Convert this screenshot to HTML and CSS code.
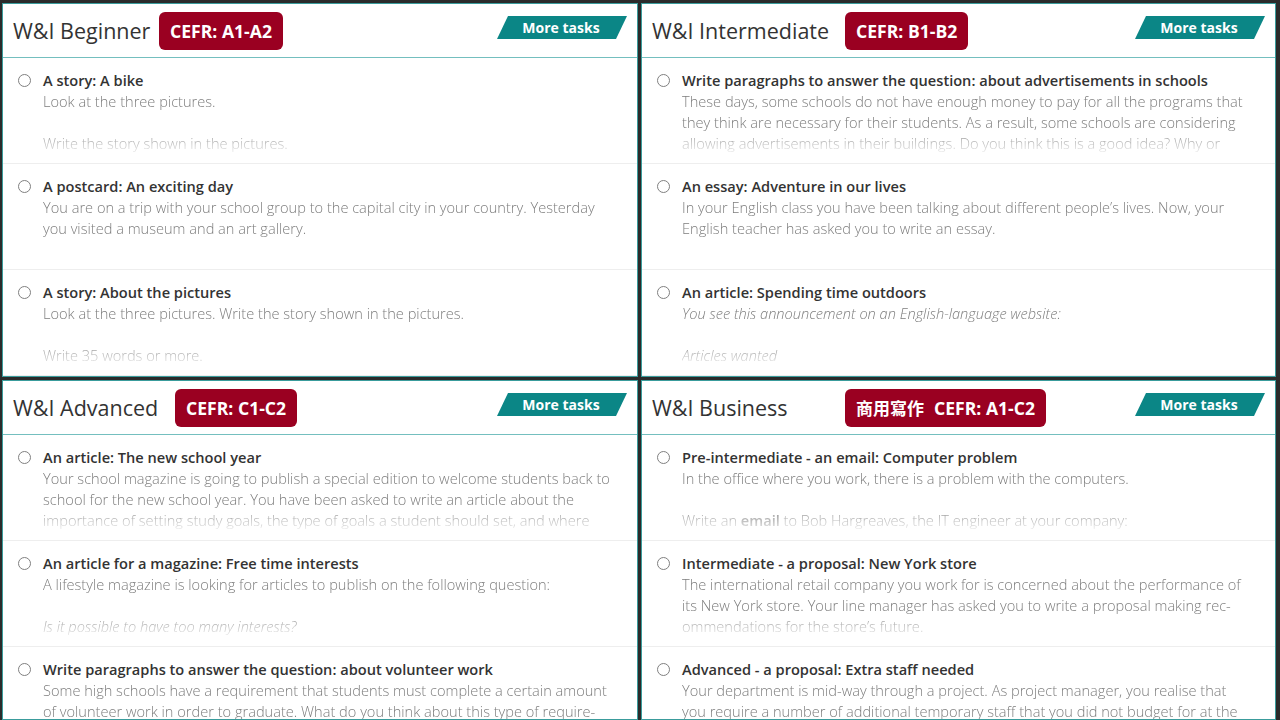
FILE: index.html
```html
<!DOCTYPE html>
<html lang="en">
<head>
<meta charset="utf-8">
<title>Writing tasks</title>
<link rel="stylesheet" href="styles.css">
</head>
<body>
<main class="board">

  <section class="panel panel--beginner">
    <header class="panel-head">
      <h2 class="panel-title">W&amp;I Beginner</h2>
      <span class="badge">CEFR: A1-A2</span>
      <a class="more" href="#">More tasks</a>
    </header>
    <ul class="tasks">
      <li class="task">
        <span class="radio"></span>
        <div class="task-body">
          <h3 class="task-title">A story: A bike</h3>
          <div class="task-desc">
            <p>Look at the three pictures.</p>
            <p>Write the story shown in the pictures.</p>
          </div>
        </div>
      </li>
      <li class="task">
        <span class="radio"></span>
        <div class="task-body">
          <h3 class="task-title">A postcard: An exciting day</h3>
          <div class="task-desc">
            <p>You are on a trip with your school group to the capital city in your country. Yesterday you visited a museum and an art gallery.</p>
          </div>
        </div>
      </li>
      <li class="task">
        <span class="radio"></span>
        <div class="task-body">
          <h3 class="task-title">A story: About the pictures</h3>
          <div class="task-desc">
            <p>Look at the three pictures. Write the story shown in the pictures.</p>
            <p>Write 35 words or more.</p>
          </div>
        </div>
      </li>
    </ul>
  </section>

  <section class="panel panel--intermediate panel--right">
    <header class="panel-head">
      <h2 class="panel-title">W&amp;I Intermediate</h2>
      <span class="badge">CEFR: B1-B2</span>
      <a class="more" href="#">More tasks</a>
    </header>
    <ul class="tasks">
      <li class="task">
        <span class="radio"></span>
        <div class="task-body">
          <h3 class="task-title">Write paragraphs to answer the question: about advertisements in schools</h3>
          <div class="task-desc">
            <p>These days, some schools do not have enough money to pay for all the programs that they think are necessary for their students. As a result, some schools are considering allowing advertisements in their buildings. Do you think this is a good idea? Why or why not?</p>
          </div>
        </div>
      </li>
      <li class="task">
        <span class="radio"></span>
        <div class="task-body">
          <h3 class="task-title">An essay: Adventure in our lives</h3>
          <div class="task-desc">
            <p>In your English class you have been talking about different people’s lives. Now, your English teacher has asked you to write an essay.</p>
          </div>
        </div>
      </li>
      <li class="task">
        <span class="radio"></span>
        <div class="task-body">
          <h3 class="task-title">An article: Spending time outdoors</h3>
          <div class="task-desc">
            <p><em>You see this announcement on an English-language website:</em></p>
            <p><em>Articles wanted</em></p>
          </div>
        </div>
      </li>
    </ul>
  </section>

  <section class="panel panel--advanced">
    <header class="panel-head">
      <h2 class="panel-title">W&amp;I Advanced</h2>
      <span class="badge">CEFR: C1-C2</span>
      <a class="more" href="#">More tasks</a>
    </header>
    <ul class="tasks">
      <li class="task">
        <span class="radio"></span>
        <div class="task-body">
          <h3 class="task-title">An article: The new school year</h3>
          <div class="task-desc">
            <p>Your school magazine is going to publish a special edition to welcome students back to school for the new school year. You have been asked to write an article about the importance of setting study goals, the type of goals a student should set, and where students can find support.</p>
          </div>
        </div>
      </li>
      <li class="task">
        <span class="radio"></span>
        <div class="task-body">
          <h3 class="task-title">An article for a magazine: Free time interests</h3>
          <div class="task-desc">
            <p>A lifestyle magazine is looking for articles to publish on the following question:</p>
            <p><em>Is it possible to have too many interests?</em></p>
          </div>
        </div>
      </li>
      <li class="task">
        <span class="radio"></span>
        <div class="task-body">
          <h3 class="task-title">Write paragraphs to answer the question: about volunteer work</h3>
          <div class="task-desc">
            <p>Some high schools have a requirement that students must complete a certain amount of volunteer work in order to graduate. What do you think about this type of require&shy;ment?</p>
          </div>
        </div>
      </li>
    </ul>
  </section>

  <section class="panel panel--business panel--right">
    <header class="panel-head">
      <h2 class="panel-title">W&amp;I Business</h2>
      <span class="badge"><span class="badge-cjk">商用寫作</span>CEFR: A1-C2</span>
      <a class="more" href="#">More tasks</a>
    </header>
    <ul class="tasks">
      <li class="task">
        <span class="radio"></span>
        <div class="task-body">
          <h3 class="task-title">Pre-intermediate - an email: Computer problem</h3>
          <div class="task-desc">
            <p>In the office where you work, there is a problem with the computers.</p>
            <p>Write an <strong>email</strong> to Bob Hargreaves, the IT engineer at your company:</p>
          </div>
        </div>
      </li>
      <li class="task">
        <span class="radio"></span>
        <div class="task-body">
          <h3 class="task-title">Intermediate - a proposal: New York store</h3>
          <div class="task-desc">
            <p>The international retail company you work for is concerned about the performance of its New York store. Your line manager has asked you to write a proposal making rec&shy;ommendations for the store’s future.</p>
          </div>
        </div>
      </li>
      <li class="task">
        <span class="radio"></span>
        <div class="task-body">
          <h3 class="task-title">Advanced - a proposal: Extra staff needed</h3>
          <div class="task-desc">
            <p>Your department is mid-way through a project. As project manager, you realise that you require a number of additional temporary staff that you did not budget for at the start of the project.</p>
          </div>
        </div>
      </li>
    </ul>
  </section>

</main>
</body>
</html>
```

FILE: styles.css
```css
* {
  box-sizing: border-box;
}

html,
body {
  margin: 0;
  padding: 0;
}

body {
  width: 1280px;
  height: 720px;
  overflow: hidden;
  background: #2b2b2b;
  font-family: "Open Sans", "Noto Sans", "Noto Sans CJK TC", sans-serif;
}

.board {
  display: grid;
  grid-template-columns: 636px 635px;
  grid-template-rows: 374px 340px;
  column-gap: 3px;
  row-gap: 3px;
  padding: 3px 4px 0 2px;
  width: 1280px;
  height: 720px;
  background: #2b2b2b;
}

.panel {
  display: flex;
  flex-direction: column;
  overflow: hidden;
  background: #fff;
  border: 1px solid #3a9c9c;
}

.panel-head {
  display: flex;
  align-items: flex-start;
  flex-shrink: 0;
  height: 54px;
  padding: 8px 10px 0 10px;
  border-bottom: 1px solid #74bfbf;
}

.panel-title {
  margin: 0;
  font-size: 21.5px;
  font-weight: 400;
  line-height: 38px;
  color: #333;
  white-space: nowrap;
}

.panel--beginner .panel-title { width: 146px; }
.panel--intermediate .panel-title { width: 193px; }
.panel--advanced .panel-title { width: 162px; }
.panel--business .panel-title { width: 193px; }

.badge {
  height: 38px;
  padding: 0 11px;
  border-radius: 6px;
  background: #9a0021;
  color: #fff;
  font-size: 17.6px;
  font-weight: 700;
  line-height: 38px;
  white-space: nowrap;
}

.badge-cjk {
  margin-right: 10px;
  font-family: "Noto Sans CJK TC", "Noto Sans CJK SC", sans-serif;
  font-size: 17px;
  font-weight: 700;
}

.more {
  width: 130px;
  height: 23px;
  margin-left: auto;
  margin-top: 4px;
  padding-right: 2px;
  background: #0b8686;
  color: #fff;
  font-size: 14px;
  font-weight: 700;
  line-height: 23px;
  text-align: center;
  text-decoration: none;
  clip-path: polygon(11px 0, 100% 0, calc(100% - 11px) 100%, 0 100%);
}

.tasks {
  margin: 0;
  padding: 0;
  list-style: none;
}

.task {
  display: flex;
  gap: 12px;
  height: 106px;
  padding: 12px 22px 0 15px;
  border-bottom: 1px solid #eeeeee;
  overflow: hidden;
}

.panel--right .task {
  padding-right: 30px;
}

.radio {
  flex-shrink: 0;
  width: 13px;
  height: 13px;
  margin-top: 4px;
  border: 1px solid #808080;
  border-radius: 50%;
}

.task-body {
  flex: 1;
  min-width: 0;
}

.task-title {
  margin: 0;
  font-size: 14.6px;
  font-weight: 600;
  line-height: 21px;
  color: #333;
  white-space: nowrap;
}

.task-desc {
  height: 63px;
  overflow: hidden;
  font-size: 14.6px;
  font-weight: 300;
  line-height: 21px;
  color: #7d7d7d;
  -webkit-mask-image: linear-gradient(to bottom, #000 0, #000 38px, rgba(0, 0, 0, 0.12) 63px);
  mask-image: linear-gradient(to bottom, #000 0, #000 38px, rgba(0, 0, 0, 0.12) 63px);
}

.task-desc p {
  margin: 0 0 21px;
}

.task-desc strong {
  font-weight: 600;
}
```
